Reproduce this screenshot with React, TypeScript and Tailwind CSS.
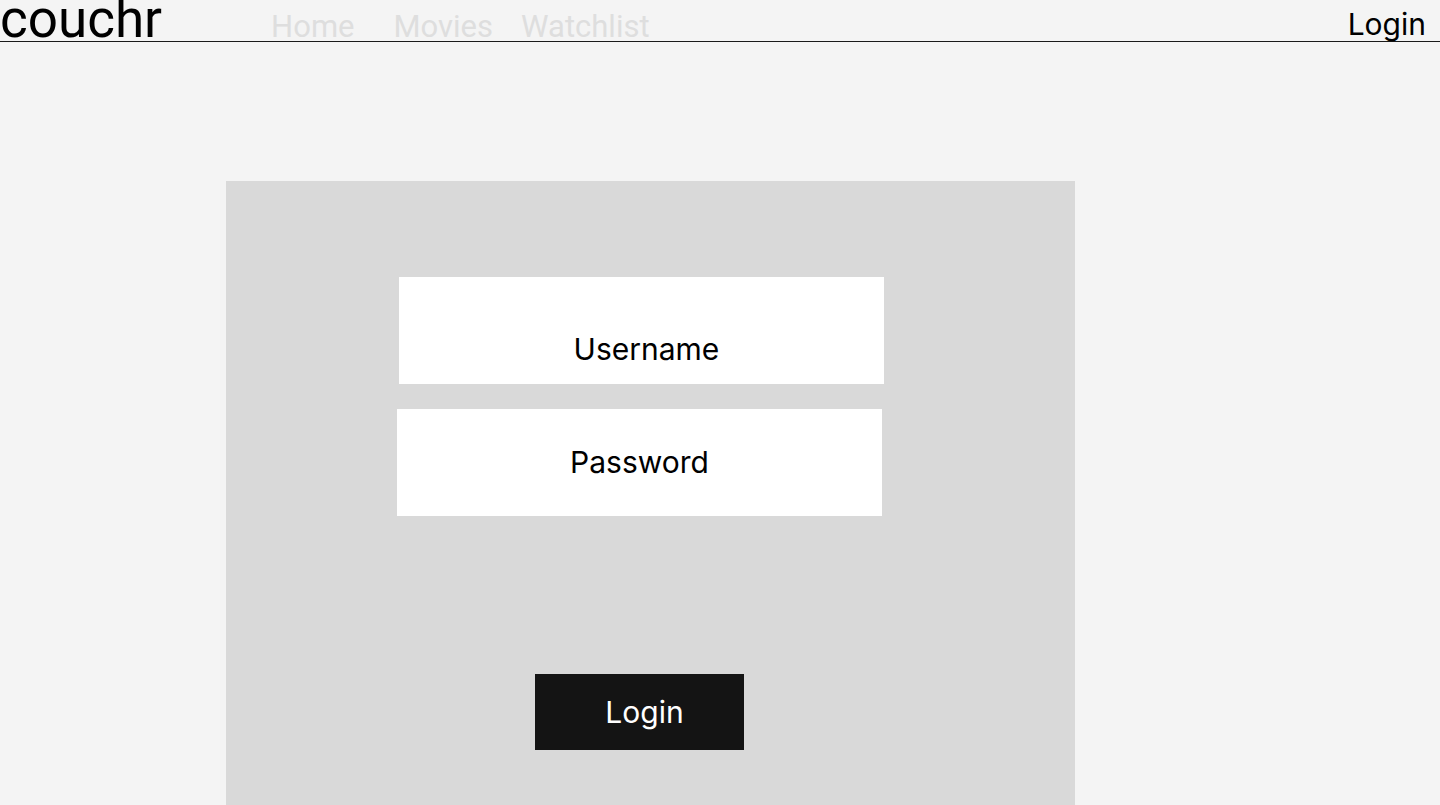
import React from "react";

const roboto = { fontFamily: "Roboto, 'Liberation Sans', sans-serif" };
const inter = { fontFamily: "Inter, 'Liberation Sans', sans-serif" };

export default function App() {
  const nav = [
    { label: "Home", cls: "ml-[109px]" },
    { label: "Movies", cls: "ml-[39px]" },
    { label: "Watchlist", cls: "ml-[28px]" },
  ];

  return (
    <div className="min-h-screen w-full overflow-hidden bg-[#f4f4f4]">
      {/* top bar */}
      <header className="flex h-[42px] items-start border-b border-[#1a1a1a]">
        <div
          className="mt-[-7px] text-[53px] leading-[53px] text-black"
          style={roboto}
        >
          couchr
        </div>
        {nav.map((item) => (
          <a
            key={item.label}
            className={`${item.cls} mt-[11px] text-[31px] leading-[31px] text-[#dedede]`}
            style={roboto}
          >
            {item.label}
          </a>
        ))}
        <div
          className="ml-auto mr-[14px] mt-[9px] text-[30px] leading-[30px] text-black"
          style={inter}
        >
          Login
        </div>
      </header>

      <main className="pl-[226px] pt-[139px]">
        <div className="flex h-[624px] w-[849px] flex-col bg-[#d9d9d9]" style={inter}>
          <div className="ml-[173px] mt-[96px] flex h-[107px] w-[485px] justify-center bg-white pl-[10px] pt-[57px]">
            <span className="text-[30px] leading-[30px] text-black">Username</span>
          </div>
          <div className="ml-[171px] mt-[25px] flex h-[107px] w-[485px] justify-center bg-white pt-[38px]">
            <span className="text-[30px] leading-[30px] text-black">Password</span>
          </div>
          <button className="ml-[309px] mt-[158px] flex h-[76px] w-[209px] justify-center bg-[#141414] pl-[10px] pt-[23px]">
            <span className="text-[30px] leading-[30px] text-white">Login</span>
          </button>
        </div>
      </main>
    </div>
  );
}
